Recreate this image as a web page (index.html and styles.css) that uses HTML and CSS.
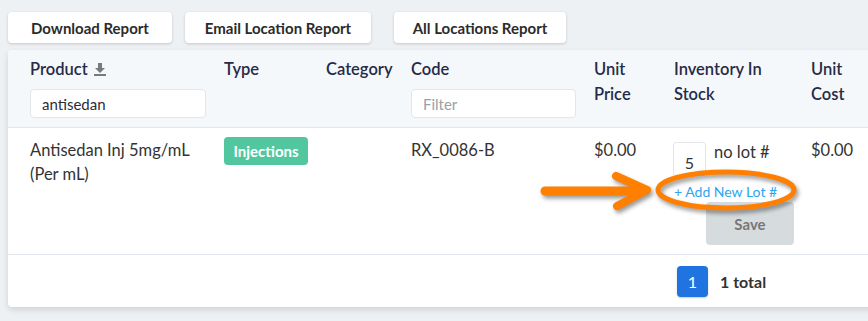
FILE: index.html
```html
<!DOCTYPE html>
<html lang="en">
<head>
  <meta charset="UTF-8" />
  <title>Inventory</title>
  <link rel="stylesheet" href="styles.css">
</head>
<body>
  <!-- REPORT BUTTONS -->
  <div class="toolbar">
    <button class="report-btn">Download Report</button>
    <button class="report-btn email">Email Location Report</button>
    <button class="report-btn all">All Locations Report</button>
  </div>

  <!-- INVENTORY TABLE -->
  <div class="card">
    <div class="row head">
      <div class="cell">
        <div class="th">Product
          <svg class="sort-icon" width="12" height="14" viewBox="0 0 12 14">
            <path d="M4 1h4v5h3L6 11 1 6h3z" fill="#7a7a7a"/>
            <rect x="0" y="12" width="12" height="2" fill="#7a7a7a"/>
          </svg>
        </div>
        <input class="filter product-filter" type="text" value="antisedan">
      </div>
      <div class="cell"><div class="th">Type</div></div>
      <div class="cell"><div class="th">Category</div></div>
      <div class="cell">
        <div class="th">Code</div>
        <input class="filter code-filter" type="text" placeholder="Filter">
      </div>
      <div class="cell"><div class="th">Unit<br>Price</div></div>
      <div class="cell"><div class="th">Inventory In<br>Stock</div></div>
      <div class="cell"><div class="th">Unit<br>Cost</div></div>
    </div>

    <div class="row body-row">
      <div class="cell">Antisedan Inj 5mg/mL<br>(Per mL)</div>
      <div class="cell"><span class="badge">Injections</span></div>
      <div class="cell"></div>
      <div class="cell">RX_0086-B</div>
      <div class="cell">$0.00</div>
      <div class="cell">
        <div class="stock-line">
          <input class="qty" type="text" value="5">
          <span class="lot">no lot #</span>
        </div>
        <a class="add-lot" href="#">+ Add New Lot #</a>
        <button class="save-btn">Save</button>
      </div>
      <div class="cell">$0.00</div>
    </div>

    <div class="pager">
      <span class="page-num">1</span>
      <span class="total">1 total</span>
    </div>
  </div>

  <!-- callout drawn over the table -->
  <svg class="callout" width="270" height="64" viewBox="0 0 270 64">
    <g fill="none" stroke="#ff7f00" stroke-linecap="round" stroke-linejoin="round">
      <line x1="9" y1="31" x2="106" y2="31" stroke-width="9"/>
      <polyline points="80,16 111,30 81,46" stroke-width="8"/>
      <ellipse cx="190" cy="30" rx="68" ry="18" stroke-width="5"/>
    </g>
  </svg>
</body>
</html>
```

FILE: styles.css
```css
:root {
  --page-bg: #eef1f4;
  --head-bg: #f5f8fb;
  --line: #e2e7ed;
  --head-text: #262b48;
  --text: #333333;
  --green: #52c79f;
  --blue: #1f74e0;
  --link: #2aa6f0;
  --font-family: "Source Sans Pro", Lato, "Liberation Sans", sans-serif;
}
* {
  margin: 0;
  padding: 0;
  box-sizing: border-box;
  font-family: var(--font-family);
}
body {
  background: var(--page-bg);
  color: var(--text);
  width: 868px;
  height: 321px;
  overflow: hidden;
  position: relative;
}

/* Buttons */
.toolbar {
  display: flex;
  padding: 12px 0 0 8px;
}
.report-btn {
  height: 31px;
  padding: 0 10px;
  background: #fff;
  border: none;
  border-radius: 4px;
  box-shadow: 0 1px 3px rgba(0, 0, 0, 0.18);
  font-size: 15px;
  font-weight: bold;
  color: #2b2b2b;
}
.report-btn:nth-child(1) { width: 164px; }
.report-btn.email { width: 186px; margin-left: 13px; }
.report-btn.all { width: 172px; margin-left: 23px; }

/* Card */
.card {
  margin: 7px 0 0 8px;
  width: 900px;
  background: #fff;
  border-radius: 4px;
  box-shadow: 0 3px 6px rgba(0, 0, 0, 0.12);
  overflow: hidden;
}
.row {
  display: grid;
  grid-template-columns: 194px 102px 85px 183px 80px 137px 1fr;
  padding-left: 22px;
}
.head {
  background: var(--head-bg);
  border-bottom: 1px solid var(--line);
  height: 78px;
  padding-top: 7px;
}
.th {
  font-size: 16.5px;
  font-weight: 600;
  color: var(--head-text);
  line-height: 25px;
}
.sort-icon {
  vertical-align: -1px;
  margin-left: 2px;
}
.filter {
  display: block;
  height: 29px;
  margin-top: 7px;
  border: 1px solid #e3e6ea;
  border-radius: 4px;
  padding: 0 11px;
  font-size: 15px;
  color: #2b2b3b;
  background: #fff;
}
.product-filter { width: 176px; }
.code-filter { width: 165px; }
.filter::placeholder { color: #9aa0a6; }

/* Body row */
.body-row {
  height: 127px;
  border-bottom: 1px solid var(--line);
  padding-top: 10px;
  font-size: 16.5px;
  line-height: 24px;
}
.badge {
  display: inline-block;
  width: 84px;
  height: 28px;
  line-height: 28px;
  margin-top: -1px;
  text-align: center;
  background: var(--green);
  color: #fff;
  font-weight: bold;
  font-size: 15px;
  border-radius: 4px;
}
.stock-line {
  display: flex;
  align-items: flex-start;
  gap: 8px;
}
.lot {
  margin-top: 2px;
}
.qty {
  width: 33px;
  height: 34px;
  margin-top: 4px;
  margin-left: -1px;
  border: 1px solid #e3e6ea;
  border-radius: 3px;
  text-align: center;
  font-size: 16px;
  color: #333;
  padding-top: 6px;
}
.add-lot {
  display: block;
  margin-top: 6px;
  font-size: 14px;
  line-height: 20px;
  color: var(--link);
  text-decoration: none;
}
.save-btn {
  display: block;
  width: 88px;
  height: 43px;
  margin: 0 0 0 32px;
  background: #d6dbdd;
  border: none;
  border-radius: 4px;
  font-size: 15px;
  font-weight: bold;
  color: #777;
}

/* Pager */
.pager {
  height: 52px;
  display: flex;
  align-items: center;
  padding-left: 669px;
  gap: 12px;
}
.page-num {
  width: 31px;
  height: 31px;
  line-height: 31px;
  text-align: center;
  background: var(--blue);
  color: #fff;
  border-radius: 4px;
  font-size: 16px;
  box-shadow: 0 1px 2px rgba(0, 0, 0, 0.2);
}
.total {
  font-size: 16px;
  font-weight: bold;
  color: #333;
}

/* Orange callout overlay */
.callout {
  position: absolute;
  left: 536px;
  top: 160px;
  filter: drop-shadow(2px 3px 2px rgba(0, 0, 0, 0.4));
}
```
